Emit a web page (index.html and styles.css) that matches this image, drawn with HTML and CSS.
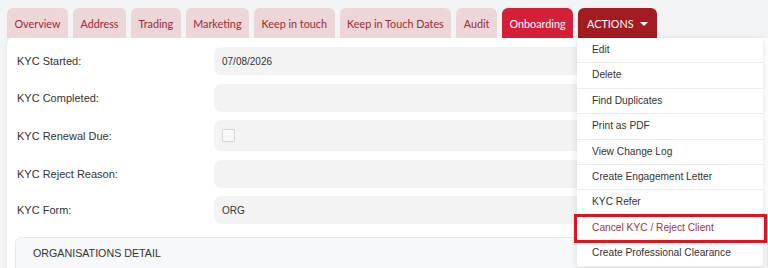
FILE: index.html
```html
<!DOCTYPE html>
<html lang="en">
<head>
  <meta charset="UTF-8" />
  <title>Client - Onboarding</title>
  <link rel="stylesheet" href="styles.css">
</head>
<body>
  <div class="tabs">
    <div class="tab">Overview</div>
    <div class="tab">Address</div>
    <div class="tab">Trading</div>
    <div class="tab">Marketing</div>
    <div class="tab">Keep in touch</div>
    <div class="tab">Keep in Touch Dates</div>
    <div class="tab">Audit</div>
    <div class="tab active">Onboarding</div>
    <div class="tab actions">
      ACTIONS <span class="caret"></span>
      <ul class="menu">
        <li>Edit</li>
        <li>Delete</li>
        <li>Find Duplicates</li>
        <li>Print as PDF</li>
        <li>View Change Log</li>
        <li>Create Engagement Letter</li>
        <li>KYC Refer</li>
        <li class="danger">Cancel KYC / Reject Client</li>
        <li>Create Professional Clearance</li>
      </ul>
    </div>
  </div>

  <div class="panel">
    <div class="row">
      <label>KYC Started:</label>
      <div class="field">07/08/2026</div>
    </div>
    <div class="row">
      <label>KYC Completed:</label>
      <div class="field"></div>
    </div>
    <div class="row">
      <label>KYC Renewal Due:</label>
      <div class="field tall"><span class="check"></span></div>
    </div>
    <div class="row">
      <label>KYC Reject Reason:</label>
      <div class="field"></div>
    </div>
    <div class="row">
      <label>KYC Form:</label>
      <div class="field">ORG</div>
    </div>

    <div class="section">ORGANISATIONS DETAIL</div>
  </div>
</body>
</html>
```

FILE: styles.css
```css
body {
  margin: 0;
  padding: 8px 0 0 7px;
  background: #f3f4f6;
  font-family: 'Liberation Sans', Arial, sans-serif;
  font-size: 11px;
  color: #333;
  overflow: hidden;
  height: 268px;
  box-sizing: border-box;
}

.tabs {
  display: flex;
  gap: 5px;
  height: 30px;
}

.tab {
  position: relative;
  display: flex;
  align-items: center;
  padding: 0 7.5px;
  background: #ecd6d8;
  color: #9e2a36;
  font-family: Lato, sans-serif;
  font-size: 10.8px;
  border-radius: 6px 6px 0 0;
}

.tab.active {
  background: #d41f37;
  color: #fff;
}

.tab.actions {
  background: #a51b22;
  color: #fff;
  padding: 0 9px;
  gap: 6px;
}

.caret {
  width: 0;
  height: 0;
  border-left: 4px solid transparent;
  border-right: 4px solid transparent;
  border-top: 4px solid #fff;
  margin-top: 1px;
}

.menu {
  position: absolute;
  top: 30px;
  left: -1px;
  width: 186px;
  margin: 0;
  padding: 0;
  list-style: none;
  background: #fff;
  border-radius: 4px;
  box-shadow: 0 2px 8px rgba(0, 0, 0, 0.12);
  font-family: 'Liberation Sans', Arial, sans-serif;
  font-size: 10.2px;
  color: #333;
  z-index: 5;
}

.menu li {
  height: 24.4px;
  line-height: 24.4px;
  padding-left: 15px;
  border-bottom: 1px solid #ececec;
  position: relative;
}

.menu li.danger {
  color: #a8323f;
}

.menu li.danger::after {
  content: "";
  position: absolute;
  left: -3px;
  right: -4px;
  top: -2px;
  bottom: -3px;
  border: 3px solid #e3131d;
}

.panel {
  background: #fff;
  border-radius: 6px 0 0 0;
  padding: 9px 0 0 8px;
  height: 240px;
  box-shadow: -1px 0 3px rgba(0, 0, 0, 0.05);
}

.row {
  display: flex;
  align-items: center;
  margin-bottom: 8.5px;
}

.row label {
  width: 197px;
  padding-left: 2px;
}

.field {
  flex: 1;
  height: 28px;
  margin-right: 18px;
  background: #f3f3f3;
  border-radius: 7px;
  display: flex;
  align-items: center;
  padding-left: 8px;
  font-size: 10px;
}

.field.tall {
  height: 31px;
}

.check {
  width: 11px;
  height: 11px;
  border: 1px solid #d3d6da;
  background: #f7f7f7;
  border-radius: 1px;
}

.section {
  margin: 13px 0 0 0;
  height: 40px;
  background: #f7f8f9;
  border: 1px solid #e6e7e9;
  border-radius: 6px;
  padding: 9px 0 0 17px;
  box-sizing: border-box;
  font-size: 10.7px;
  color: #333;
}
```
